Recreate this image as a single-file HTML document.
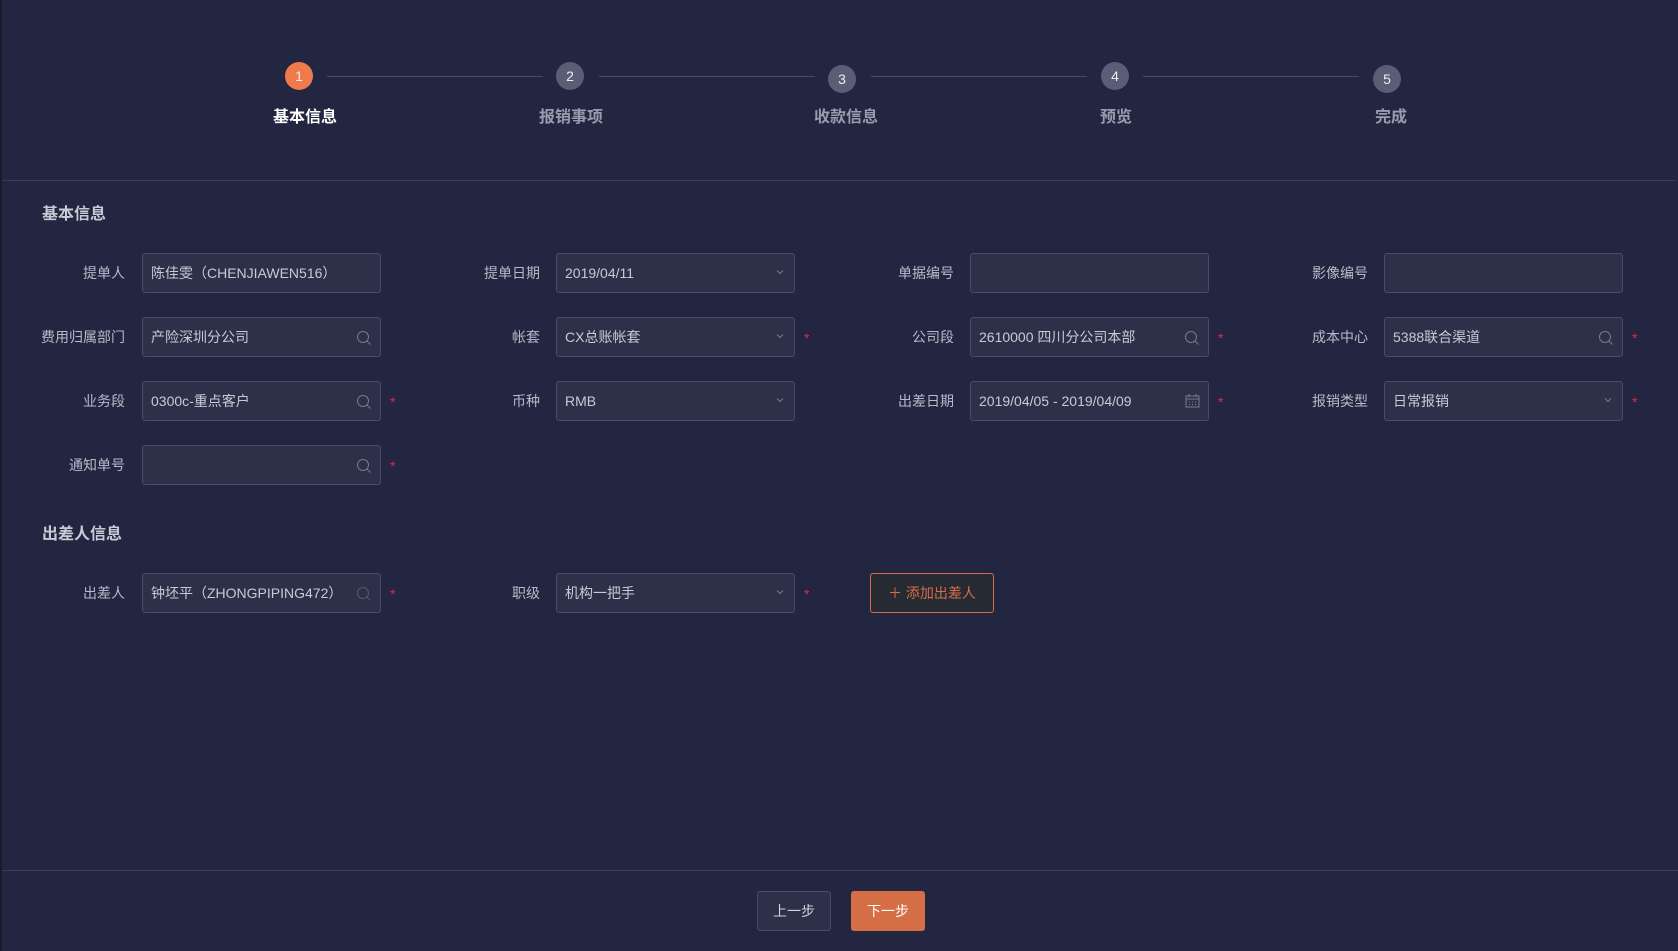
<!DOCTYPE html>
<html><head><meta charset="utf-8"><style>
*{box-sizing:border-box;margin:0;padding:0}
body{width:1678px;height:951px;background:#222640;font-family:"Liberation Sans","Noto Sans CJK SC",sans-serif;position:relative;overflow:hidden;color:#c8cad6}
.edge{position:absolute;left:0;top:0;width:2px;height:951px;background:#1a1c2c}
.hl{position:absolute;height:1px;background:#3a3d55}
.circ{position:absolute;width:28px;height:28px;border-radius:50%;background:#5a5d75;color:#eee;font-size:14px;text-align:center;line-height:28px}
.sl{position:absolute;height:1px;background:#4a4d62;top:76px}
.st{position:absolute;top:103px;font-size:16px;color:#9a9cae;font-weight:600;transform:translateX(-50%);white-space:nowrap}
.title{position:absolute;left:42px;font-size:16px;font-weight:bold;color:#c8cad6}
.lab{position:absolute;width:125px;text-align:right;font-size:14px;color:#b8bac8;line-height:40px;height:40px}
.inp{position:absolute;width:239px;height:40px;background:#2e3049;border:1px solid #4a4b66;border-radius:3px;font-size:14px;color:#c8cad6;line-height:38px;padding-left:8px}
.inp svg{position:absolute;right:8px;top:12px}
.star{position:absolute;color:#e8283a;font-size:14px;line-height:42px}
.btn{position:absolute;height:40px;border-radius:3px;font-size:14px;text-align:center;line-height:38px}
</style></head><body>
<div class="edge"></div>
<div class="circ" style="left:285px;top:62px;background:#f07a4a">1</div>
<div class="circ" style="left:556px;top:62px">2</div>
<div class="circ" style="left:828px;top:65px">3</div>
<div class="circ" style="left:1101px;top:62px">4</div>
<div class="circ" style="left:1373px;top:65px">5</div>
<div class="sl" style="left:327px;width:216px"></div>
<div class="sl" style="left:599px;width:216px"></div>
<div class="sl" style="left:871px;width:216px"></div>
<div class="sl" style="left:1143px;width:216px"></div>
<div class="st" style="left:305px;color:#fff">基本信息</div>
<div class="st" style="left:571px">报销事项</div>
<div class="st" style="left:846px">收款信息</div>
<div class="st" style="left:1116px">预览</div>
<div class="st" style="left:1391px">完成</div>
<div class="hl" style="left:2px;width:1674px;top:180px"></div>
<div class="title" style="top:200px">基本信息</div>

<div class="lab" style="left:0;top:253px">提单人</div>
<div class="inp" style="left:142px;top:253px">陈佳雯（CHENJIAWEN516）</div>
<div class="lab" style="left:415px;top:253px">提单日期</div>
<div class="inp" style="left:556px;top:253px">2019/04/11<svg width="12" height="12" viewBox="0 0 12 12"><path d="M3 4.5l3 3 3-3" fill="none" stroke="#777a90"/></svg></div>
<div class="lab" style="left:829px;top:253px">单据编号</div>
<div class="inp" style="left:970px;top:253px"></div>
<div class="lab" style="left:1243px;top:253px">影像编号</div>
<div class="inp" style="left:1384px;top:253px"></div>

<div class="lab" style="left:0;top:317px">费用归属部门</div>
<div class="inp" style="left:142px;top:317px">产险深圳分公司<svg width="16" height="16" viewBox="0 0 16 16"><circle cx="7" cy="7" r="5.5" fill="none" stroke="#777a90" stroke-width="1"/><path d="M11 11l3.5 3.5" stroke="#777a90" stroke-width="1"/></svg></div>
<div class="lab" style="left:415px;top:317px">帐套</div>
<div class="inp" style="left:556px;top:317px">CX总账帐套<svg width="12" height="12" viewBox="0 0 12 12"><path d="M3 4.5l3 3 3-3" fill="none" stroke="#777a90"/></svg></div>
<div class="star" style="left:804px;top:317px">*</div>
<div class="lab" style="left:829px;top:317px">公司段</div>
<div class="inp" style="left:970px;top:317px">2610000 四川分公司本部<svg width="16" height="16" viewBox="0 0 16 16"><circle cx="7" cy="7" r="5.5" fill="none" stroke="#777a90" stroke-width="1"/><path d="M11 11l3.5 3.5" stroke="#777a90" stroke-width="1"/></svg></div>
<div class="star" style="left:1218px;top:317px">*</div>
<div class="lab" style="left:1243px;top:317px">成本中心</div>
<div class="inp" style="left:1384px;top:317px">5388联合渠道<svg width="16" height="16" viewBox="0 0 16 16"><circle cx="7" cy="7" r="5.5" fill="none" stroke="#777a90" stroke-width="1"/><path d="M11 11l3.5 3.5" stroke="#777a90" stroke-width="1"/></svg></div>
<div class="star" style="left:1632px;top:317px">*</div>

<div class="lab" style="left:0;top:381px">业务段</div>
<div class="inp" style="left:142px;top:381px">0300c-重点客户<svg width="16" height="16" viewBox="0 0 16 16"><circle cx="7" cy="7" r="5.5" fill="none" stroke="#777a90" stroke-width="1"/><path d="M11 11l3.5 3.5" stroke="#777a90" stroke-width="1"/></svg></div>
<div class="star" style="left:390px;top:381px">*</div>
<div class="lab" style="left:415px;top:381px">币种</div>
<div class="inp" style="left:556px;top:381px">RMB<svg width="12" height="12" viewBox="0 0 12 12"><path d="M3 4.5l3 3 3-3" fill="none" stroke="#777a90"/></svg></div>
<div class="lab" style="left:829px;top:381px">出差日期</div>
<div class="inp" style="left:970px;top:381px">2019/04/05 - 2019/04/09<svg width="15" height="14" viewBox="0 0 15 14"><rect x="1" y="2" width="13" height="11" fill="none" stroke="#777a90"/><path d="M1 5h13M4 0v3M11 0v3M4 8h1M7 8h1M10 8h1M4 10.5h1M7 10.5h1M10 10.5h1" stroke="#777a90"/></svg></div>
<div class="star" style="left:1218px;top:381px">*</div>
<div class="lab" style="left:1243px;top:381px">报销类型</div>
<div class="inp" style="left:1384px;top:381px">日常报销<svg width="12" height="12" viewBox="0 0 12 12"><path d="M3 4.5l3 3 3-3" fill="none" stroke="#777a90"/></svg></div>
<div class="star" style="left:1632px;top:381px">*</div>

<div class="lab" style="left:0;top:445px">通知单号</div>
<div class="inp" style="left:142px;top:445px"><svg width="16" height="16" viewBox="0 0 16 16"><circle cx="7" cy="7" r="5.5" fill="none" stroke="#777a90" stroke-width="1"/><path d="M11 11l3.5 3.5" stroke="#777a90" stroke-width="1"/></svg></div>
<div class="star" style="left:390px;top:445px">*</div>

<div class="title" style="top:520px">出差人信息</div>
<div class="lab" style="left:0;top:573px">出差人</div>
<div class="inp" style="left:142px;top:573px">钟坯平（ZHONGPIPING472）<svg width="16" height="16" viewBox="0 0 16 16"><circle cx="7" cy="7" r="5.5" fill="none" stroke="#555870" stroke-width="1"/><path d="M11 11l3.5 3.5" stroke="#555870" stroke-width="1"/></svg></div>
<div class="star" style="left:390px;top:573px">*</div>
<div class="lab" style="left:415px;top:573px">职级</div>
<div class="inp" style="left:556px;top:573px">机构一把手<svg width="12" height="12" viewBox="0 0 12 12"><path d="M3 4.5l3 3 3-3" fill="none" stroke="#777a90"/></svg></div>
<div class="star" style="left:804px;top:573px">*</div>
<div class="btn" style="left:870px;top:573px;width:124px;border:1px solid #d56d45;background:#252a33;color:#d56d45">＋ 添加出差人</div>

<div class="hl" style="left:2px;width:1676px;top:870px"></div>
<div class="btn" style="left:757px;top:891px;width:74px;border:1px solid #4a4b66;background:#2e3049;color:#d0d2dc">上一步</div>
<div class="btn" style="left:851px;top:891px;width:74px;background:#d56d45;color:#fff;line-height:40px">下一步</div>
</body></html>
